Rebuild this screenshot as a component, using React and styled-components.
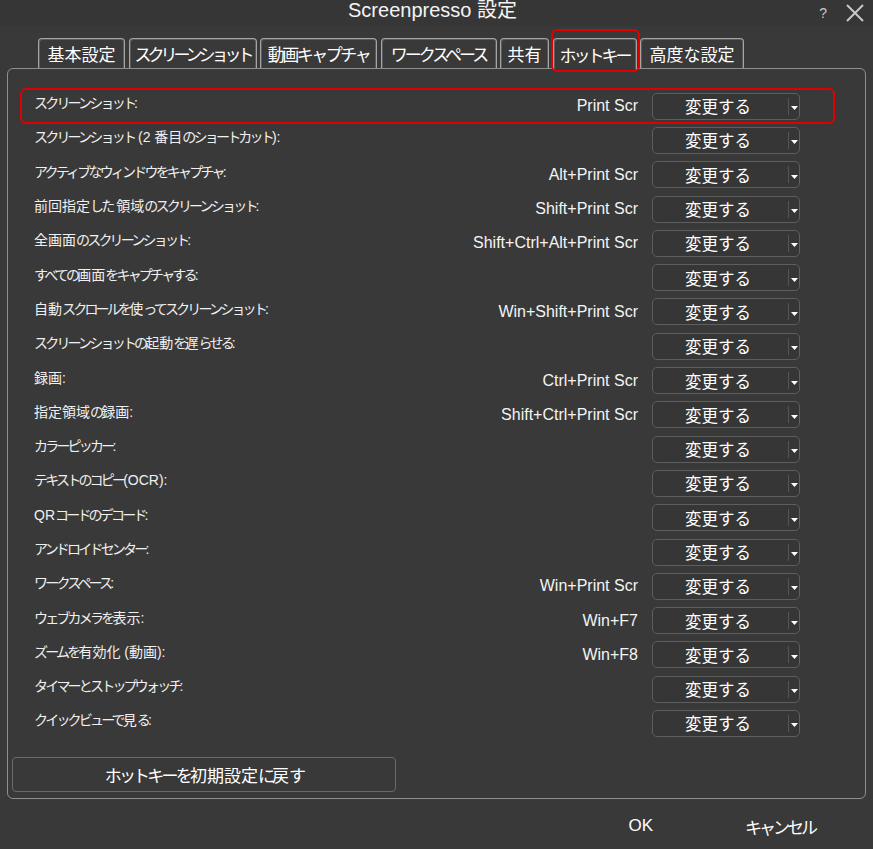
import React from 'react'
import styled, { createGlobalStyle } from 'styled-components'

const GlobalStyle = createGlobalStyle`
  html, body {
    margin: 0;
    padding: 0;
    background: #393939;
    font-family: "Liberation Sans", "Noto Sans CJK JP", sans-serif;
    color: #f2f2f2;
  }
`

// width / letter-spacing per tab (katakana are drawn narrow in the original)
const tabs = [
  { label: '基本設定', w: 87, ls: 0 },
  { label: 'スクリーンショット', w: 128, ls: -4 },
  { label: '動画キャプチャ', w: 117, ls: -2.5 },
  { label: 'ワークスペース', w: 116, ls: -3 },
  { label: '共有', w: 49, ls: 0 },
  { label: 'ホットキー', w: 84, ls: -3 },
  { label: '高度な設定', w: 104, ls: 0 },
]

const hotkeys = [
  ['スクリーンショット:', 'Print Scr'],
  ['スクリーンショット (2 番目のショートカット):', ''],
  ['アクティブなウィンドウをキャプチャ:', 'Alt+Print Scr'],
  ['前回指定した 領域のスクリーンショット:', 'Shift+Print Scr'],
  ['全画面のスクリーンショット:', 'Shift+Ctrl+Alt+Print Scr'],
  ['すべての画面をキャプチャする:', ''],
  ['自動スクロールを使ってスクリーンショット:', 'Win+Shift+Print Scr'],
  ['スクリーンショットの起動を遅らせる:', ''],
  ['録画:', 'Ctrl+Print Scr'],
  ['指定領域の録画:', 'Shift+Ctrl+Print Scr'],
  ['カラーピッカー:', ''],
  ['テキストのコピー(OCR):', ''],
  ['QRコードのデコード:', ''],
  ['アンドロイドセンター:', ''],
  ['ワークスペース:', 'Win+Print Scr'],
  ['ウェブカメラを表示:', 'Win+F7'],
  ['ズームを有効化 (動画):', 'Win+F8'],
  ['タイマーとストップウォッチ:', ''],
  ['クイックビューで見る:', ''],
]

// kana runs get squeezed, kanji and latin stay at normal width
const Narrow = ({ text }) =>
  text.split(/([\u3040-\u30ff]+)/).map((part, i) =>
    /[\u3040-\u30ff]/.test(part) ? <Kana key={i}>{part}</Kana> : part
  )

const App = () => {
  return (
    <Window>
      <GlobalStyle />
      <TitleBar>
        <Title>Screenpresso 設定</Title>
        <TitleIcons>
          <Help>?</Help>
          <svg width="20" height="20" viewBox="0 0 20 20">
            <path d="M2 2 L18 18 M18 2 L2 18" stroke="#c8c8c8" strokeWidth="2" />
          </svg>
        </TitleIcons>
      </TitleBar>

      <TabRow>
        {tabs.map((t, i) => (
          <Tab key={t.label} $w={t.w} $ls={t.ls} $active={i === 5}>
            {t.label}
            {i === 5 && <TabMark />}
          </Tab>
        ))}
      </TabRow>

      <Panel>
        <List>
          {hotkeys.map(([label, key], i) => (
            <Row key={label}>
              <Label><Narrow text={label} /></Label>
              <Keys>{key}</Keys>
              <ChangeButton>
                <span>変更する</span>
                <Arrow>
                  <svg width="7" height="4" viewBox="0 0 7 4">
                    <path d="M0 0 H7 L3.5 4 Z" fill="#ffffff" />
                  </svg>
                </Arrow>
              </ChangeButton>
              {i === 0 && <RowMark />}
            </Row>
          ))}
        </List>
        <ResetButton><Narrow text="ホットキーを初期設定に戻す" /></ResetButton>
      </Panel>

      <Footer>
        <FooterButton>OK</FooterButton>
        <FooterButton $ls={-3}>キャンセル</FooterButton>
      </Footer>
    </Window>
  )
}

export default App

const Window = styled.div`
  width: 873px;
  height: 849px;
  display: flex;
  flex-direction: column;
  overflow: hidden;
`

const TitleBar = styled.div`
  height: 26px;
  position: relative;
  display: flex;
  align-items: center;
  justify-content: center;
  background: #363636;
`

const Title = styled.div`
  font-size: 20px;
  color: #f4f4f4;
  margin-top: -10px;
  margin-left: -8px;
`

const TitleIcons = styled.div`
  position: absolute;
  right: 8px;
  top: 3px;
  display: flex;
  align-items: center;
  gap: 18px;
`

const Help = styled.span`
  font-size: 14px;
  color: #c8c8c8;
`

const TabRow = styled.div`
  display: flex;
  align-items: flex-end;
  gap: 3.5px;
  padding-left: 38px;
  height: 42px;
  position: relative;
  z-index: 1;
`

const Tab = styled.div`
  position: relative;
  width: ${p => p.$w}px;
  box-sizing: border-box;
  height: ${p => (p.$active ? '32px' : '30px')};
  margin-bottom: ${p => (p.$active ? '-2px' : '0')};
  display: flex;
  align-items: center;
  justify-content: center;
  font-size: 17px;
  letter-spacing: ${p => p.$ls}px;
  white-space: nowrap;
  color: #ffffff;
  border: 1px solid #a5a5a5;
  border-bottom: none;
  border-radius: 4px 4px 0 0;
  box-shadow: inset 1px 1px 0 #5a5a5a, inset -1px 0 0 #5a5a5a;
  background: #393939;
`

const TabMark = styled.div`
  position: absolute;
  left: -3px;
  right: -4px;
  top: -10px;
  bottom: -2px;
  border: 2px solid #e00000;
  border-radius: 6px;
`

const Panel = styled.div`
  margin: 0 7px;
  height: 731px;
  box-sizing: border-box;
  border: 1px solid #8e8e8e;
  border-radius: 6px;
  padding: 20px 0 0 4px;
  display: flex;
  flex-direction: column;
`

const List = styled.div`
  display: flex;
  flex-direction: column;
  padding-left: 22px;
  padding-right: 65px;
`

const Row = styled.div`
  position: relative;
  height: 34.3px;
  display: grid;
  grid-template-columns: 1fr auto 148px;
  column-gap: 14px;
  align-items: center;
`

const RowMark = styled.div`
  position: absolute;
  left: -14px;
  right: -35px;
  top: -1px;
  bottom: -1px;
  border: 2px solid #e00000;
  border-radius: 6px;
  pointer-events: none;
`

const Label = styled.div`
  font-size: 14px;
  color: #f0f0f0;
  margin-top: -8px;
  white-space: nowrap;
`

const Kana = styled.span`
  letter-spacing: -2.8px;
`

const Keys = styled.div`
  font-size: 16px;
  color: #f4f4f4;
  text-align: right;
`

const ChangeButton = styled.div`
  height: 27px;
  box-sizing: border-box;
  border: 1px solid #5e5e5e;
  border-radius: 5px;
  background: #363636;
  display: flex;
  align-items: center;
  font-size: 16.5px;
  color: #ffffff;

  span {
    flex: 1;
    text-align: center;
    padding-right: 5px;
  }
`

const Arrow = styled.div`
  width: 11px;
  height: 17px;
  border-left: 1px solid #555;
  display: flex;
  align-items: center;
  justify-content: center;
  padding-top: 4px;
  box-sizing: border-box;
`

const ResetButton = styled.div`
  margin-top: 16px;
  width: 384px;
  height: 35px;
  box-sizing: border-box;
  border: 1px solid #6a6a6a;
  border-radius: 4px;
  display: flex;
  align-items: center;
  justify-content: center;
  font-size: 17px;
  color: #ffffff;
  white-space: pre;
`

const Footer = styled.div`
  display: flex;
  justify-content: flex-end;
  align-items: center;
  gap: 92px;
  padding-right: 58px;
  height: 50px;
`

const FooterButton = styled.div`
  font-size: 17px;
  letter-spacing: ${p => p.$ls || 0}px;
  color: #ffffff;
  margin-top: 4px;
`
